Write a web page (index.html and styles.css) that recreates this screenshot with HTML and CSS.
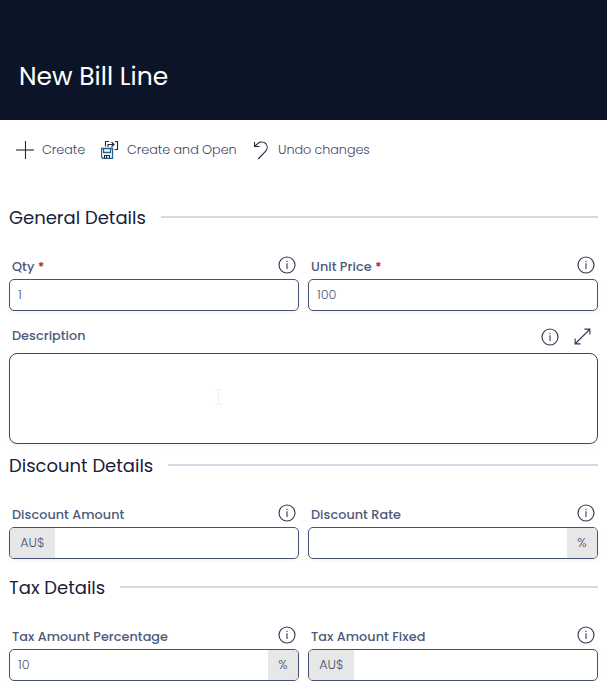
FILE: index.html
```html
<!DOCTYPE html>
<html lang="en">
<head>
<meta charset="utf-8">
<title>New Bill Line</title>
<link rel="stylesheet" href="styles.css">
</head>
<body>
<svg class="defs" aria-hidden="true">
  <symbol id="info" viewBox="0 0 18 18"><circle cx="9" cy="9" r="8" fill="none" stroke="currentColor" stroke-width="1.15"/><path d="M9 7.3V13M9 4.8V6" fill="none" stroke="currentColor" stroke-width="1.1"/></symbol>
</svg>
<header class="banner"><h1>New Bill Line</h1></header>
<nav class="toolbar">
  <button class="create"><svg width="18" height="18" viewBox="0 0 18 18"><path class="bar" d="M0 9H18"/><path d="M9.5 0V18"/></svg>Create</button>
  <button class="open"><svg width="18" height="18" viewBox="0 0 18 18"><path class="disk" d="M.5 7.5H11.5V17.5H2L.5 16Z"/><path class="disk" d="M2.5 7.5V11.5H9.5V7.5"/><path d="M3.5 17.5V14.5H8.5V17.5M5.5 15V17"/><path d="M4.5 5.5V.5H8M7 6V3.5H13M10.5 1L13 3.5L10.5 6M14 .5H16.5V8.5H13.5"/></svg>Create and Open</button>
  <button class="undo"><svg width="16" height="19" viewBox="0 0 16 19"><path d="M1.5 1V5.5H6.5M1.5 5.5L5 2.3C7.3 .5 10.7.5 12.7 2.5C14.7 4.7 14.7 8 12.5 10.3L5.2 18"/></svg>Undo changes</button>
</nav>
<main>
  <section class="first">
    <h2><span>General Details</span></h2>
    <div class="grid">
      <div class="field">
        <div class="label"><label for="qty">Qty <b>*</b></label><svg class="info"><use href="#info"/></svg></div>
        <div class="box"><input id="qty" value="1"></div>
      </div>
      <div class="field">
        <div class="label"><label for="price">Unit Price <b>*</b></label><svg class="info"><use href="#info"/></svg></div>
        <div class="box"><input id="price" value="100"></div>
      </div>
    </div>
    <div class="label wide"><label for="desc">Description</label><svg class="info"><use href="#info"/></svg><svg class="expand" viewBox="0 0 18 18"><path d="M1.3 16.7L16.7 1.3M11 1.2H16.8V7M1.2 11V16.8H7"/></svg></div>
    <div class="area"><textarea id="desc"></textarea><svg class="caret" viewBox="0 0 7 16"><path d="M0 .5H3M4 .5H7M3.5 1V15M0 15.5H3M4 15.5H7"/></svg></div>
  </section>
  <section>
    <h2><span>Discount Details</span></h2>
    <div class="grid">
      <div class="field">
        <div class="label"><label for="damount">Discount Amount</label><svg class="info"><use href="#info"/></svg></div>
        <div class="box"><span class="unit currency">AU$</span><input id="damount"></div>
      </div>
      <div class="field">
        <div class="label"><label for="drate">Discount Rate</label><svg class="info"><use href="#info"/></svg></div>
        <div class="box"><input id="drate"><span class="unit percent">%</span></div>
      </div>
    </div>
  </section>
  <section class="tax">
    <h2><span>Tax Details</span></h2>
    <div class="grid">
      <div class="field">
        <div class="label"><label for="tpercent">Tax Amount Percentage</label><svg class="info"><use href="#info"/></svg></div>
        <div class="box"><input id="tpercent" value="10"><span class="unit percent">%</span></div>
      </div>
      <div class="field">
        <div class="label"><label for="tfixed">Tax Amount Fixed</label><svg class="info"><use href="#info"/></svg></div>
        <div class="box"><span class="unit currency">AU$</span><input id="tfixed"></div>
      </div>
    </div>
  </section>
</main>
</body>
</html>
```
FILE: styles.css
```css
* { box-sizing: border-box; }
body, button, input, textarea { font-family: Poppins, Inter, "Open Sans", sans-serif; }
body { margin: 0; background: #fff; color: #4e5a7b; overflow: hidden; }
h1, h2 { margin: 0; font-weight: 400; }
.defs { display: block; width: 0; height: 0; }
svg { flex: none; }
.banner { height: 120px; padding: 61px 19px 0; background: #0c1528; color: #fff; }
h1 { font-size: 25px; line-height: 31px; white-space: nowrap; }
.toolbar { display: flex; align-items: center; height: 60px; padding-left: 16px; }
.toolbar button { display: flex; align-items: center; height: 24px; padding: 0; border: 0; background: none; color: #3d4868; font-size: 12.8px; font-weight: 300; letter-spacing: -.08px; white-space: nowrap; }
.toolbar svg { fill: none; stroke: #222936; stroke-width: 1.1; }
.toolbar .bar { stroke: #858983; stroke-width: 2; }
.toolbar .disk { stroke: #27618f; stroke-width: 1.3; }
.create { width: 85px; gap: 8px; }
.open { width: 152px; gap: 8px; }
.undo { gap: 9px; }
main { padding: 0 9px; }
.first { padding-top: 16px; }
.tax { padding-top: 7px; }
h2 { display: flex; align-items: center; height: 42px; gap: 15px; color: #17203a; font-size: 18px; line-height: 24px; white-space: nowrap; }
h2 span { padding-top: 2px; }
h2::after { content: ""; flex: 1; height: 2px; background: #d6dae6; }
.grid { display: grid; grid-template-columns: 290px 290px; gap: 9px; }
.label { display: flex; align-items: center; justify-content: space-between; height: 41px; padding: 13px 3px 0; font-size: 12.8px; font-weight: 500; line-height: 20px; letter-spacing: .05px; white-space: nowrap; }
.grid label { padding-top: 3px; }
.wide label { padding-bottom: 2px; }
.label b { color: #b5202c; font-weight: 600; }
.info { width: 18px; height: 18px; color: #303a52; }
.wide { height: 42px; padding-top: 9px; padding-right: 7px; }
.wide .info { margin-left: auto; margin-right: 15px; }
.expand { width: 17px; height: 17px; fill: none; stroke: #303a52; stroke-width: 1.2; }
.box { display: flex; height: 32px; border: 1px solid #465273; border-radius: 5px; overflow: hidden; box-shadow: 0 2px 4px #0000000d; }
input { flex: 1; min-width: 0; border: 0; padding: 0 8px; background: none; color: #4e5a7b; font-size: 12.8px; font-weight: 300; outline: 0; }
.unit { display: flex; align-items: center; justify-content: center; background: #e7e7e7; color: #465073; font-size: 12.8px; font-weight: 300; }
.currency { width: 45px; }
.percent { width: 30px; }
.area { position: relative; height: 91px; border: 1px solid #3d4760; border-radius: 8px; box-shadow: 0 2px 4px #0000000d; }
textarea { display: block; width: 100%; height: 100%; border: 0; padding: 8px; background: none; resize: none; outline: 0; }
.caret { position: absolute; left: 205px; top: 35px; width: 7px; height: 16px; fill: none; stroke: #eeeeee; }
```
